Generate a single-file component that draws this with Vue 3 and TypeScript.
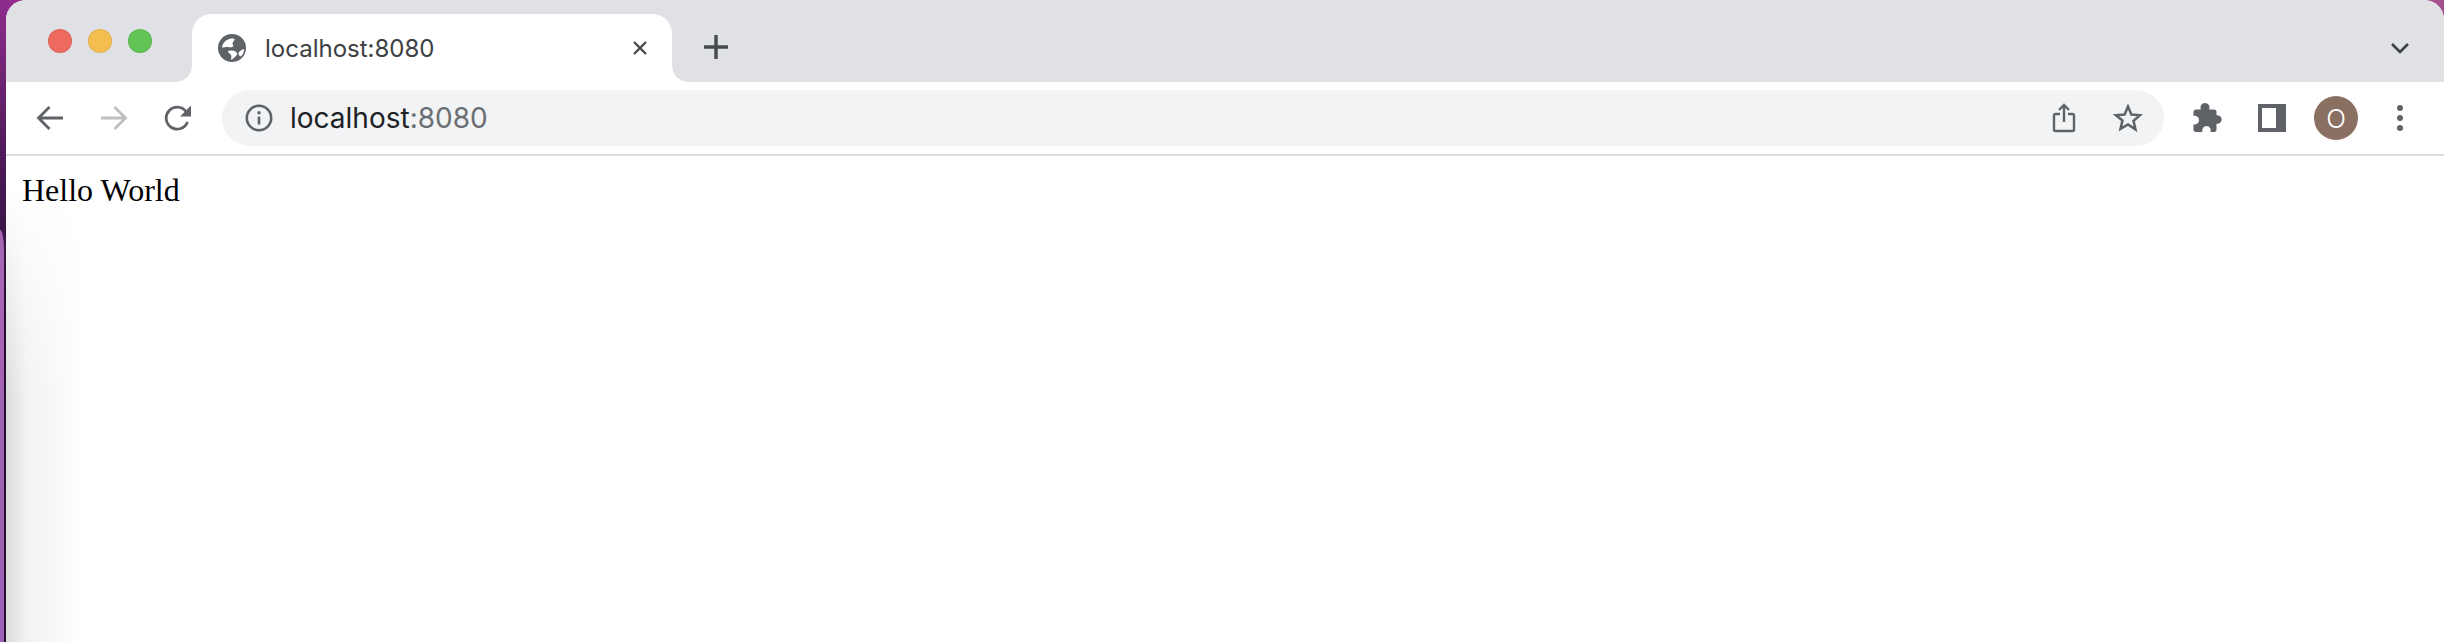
<script setup lang="ts">
const lights = ['#ee6a5f', '#f5bd4f', '#61c454'];
</script>

<template>
  <div class="page">
    <div class="desktop"></div>
    <div class="window">
      <div class="tabstrip">
        <div class="lights">
          <span v-for="c in lights" :key="c" class="light" :style="{ backgroundColor: c }"></span>
        </div>
        <div class="tab">
          <svg class="globe" width="28" height="28" viewBox="0 0 28 28">
            <circle cx="14" cy="14" r="14" fill="#5f6368" />
            <path d="M4 13.500C4.500 9 8 5.500 13 4.500c1.500 -.3 3 0 3.500 .5 .3 1.500 -1.500 2.500 -2 4 -.3 1.500 1.500 2 .5 3.500 -1.500 1.500 -3.500 .5 -5.500 .5 -2 0 -3.500 .5 -5.500 .5z" fill="#fff" />
            <path d="M10 17c2.500 -1 5.500 -.5 7.500 .5 2 1 2 3 .5 4.500 -1.500 1.500 -3 2.500 -4.500 4 -1 -1.500 .5 -3.500 -.5 -5 -.8 -1.500 -3 -2 -3 -4z" fill="#fff" />
            <path d="M20.500 19c1 -2 3.500 -3.500 5.500 -4 .3 2.500 -1 5.500 -3 7.500 -1.500 -.5 -3 -1.500 -2.500 -3.500z" fill="#fff" />
          </svg>
          <span class="tab-title">localhost:8080</span>
          <svg class="tab-close" width="16" height="16" viewBox="0 0 16 16">
            <path d="M2 2l12 12M14 2L2 14" stroke="#45484d" stroke-width="2.400" fill="none" />
          </svg>
        </div>
        <svg class="new-tab" width="24" height="24" viewBox="0 0 24 24">
          <path d="M12 1v22M1 12h22" stroke="#45484d" stroke-width="3.400" stroke-linecap="round" fill="none" />
        </svg>
        <svg class="tab-search" width="20" height="13" viewBox="0 0 20 13">
          <path d="M2 2l8 8 8-8" stroke="#3c4043" stroke-width="2.600" fill="none" />
        </svg>
      </div>

      <div class="toolbar">
        <button class="tool">
          <svg width="28" height="26" viewBox="0 0 28 26">
            <path d="M27 13H3M13.500 2 2.500 13l11 11" stroke="#5f6368" stroke-width="2.800" fill="none" />
          </svg>
        </button>
        <button class="tool">
          <svg width="28" height="26" viewBox="0 0 28 26">
            <path d="M1 13h24M14.500 2l11 11-11 11" stroke="#bdbfc2" stroke-width="2.800" fill="none" />
          </svg>
        </button>
        <button class="tool">
          <svg width="28" height="26" viewBox="0 0 28 26">
            <path d="M23.500 17a11 11 0 1 1-1.500-10.500" stroke="#5f6368" stroke-width="2.800" fill="none" />
            <path d="M27 0.500v11H16z" fill="#5f6368" />
          </svg>
        </button>

        <div class="omnibox">
          <svg class="info" width="28" height="28" viewBox="0 0 28 28">
            <circle cx="14" cy="14" r="12.200" stroke="#5f6368" stroke-width="2.600" fill="none" />
            <path d="M14 12.500v8" stroke="#5f6368" stroke-width="2.600" />
            <circle cx="14" cy="8.800" r="1.700" fill="#5f6368" />
          </svg>
          <span class="url">localhost<span class="url-port">:8080</span></span>
          <svg class="share" width="24" height="30" viewBox="0 0 24 30">
            <path d="M8 11H3.500Q2 11 2 12.500V26.500Q2 28 3.500 28h17q1.500 0 1.500-1.500V12.500Q22 11 20.500 11H16" stroke="#5f6368" stroke-width="2.400" fill="none" />
            <path d="M12 19V2.500M7 7l5-5 5 5" stroke="#5f6368" stroke-width="2.400" fill="none" />
          </svg>
          <svg class="star" width="30" height="30" viewBox="0 0 30 30">
            <path d="M15 3.500l3.400 8 8.600.7-6.500 5.700 2 8.500L15 21.400 7.500 25.900l2-8.500L3 12.200l8.600-.7z" stroke="#5f6368" stroke-width="2.500" stroke-linejoin="miter" fill="none" />
          </svg>
        </div>

        <button class="tool">
          <svg width="30" height="30" viewBox="0 0 30 30">
            <path d="M3 6.500H7.800A4.600 4.600 0 1 1 16.200 6.500H21Q23.500 6.500 23.500 9V12.300A4.300 4.300 0 1 1 23.500 20.700V26.500Q23.500 29 21 29H17.500A4.300 4.300 0 1 0 9.500 29H3Q.5 29 .5 26.500V21.200A4.300 4.300 0 1 0 .5 13V9Q.5 6.500 3 6.500z" fill="#5f6368" />
          </svg>
        </button>
        <button class="tool">
          <span class="side-panel"><span></span></span>
        </button>
        <button class="tool">
          <span class="avatar">O</span>
        </button>
        <button class="tool">
          <span class="dots"><i></i><i></i><i></i></span>
        </button>
      </div>

      <div class="content">
        <div class="shade"></div>
        <p class="hello">Hello World</p>
      </div>
    </div>
  </div>
</template>

<style>
html,
body {
  margin: 0;
  overflow: hidden;
}
</style>

<style scoped>
.page {
  display: flex;
  width: 2444px;
  height: 642px;
  background: linear-gradient(90deg, #8f2c8c 0 40px, #a5508f 40px);
  overflow: hidden;
}

.desktop {
  flex: 0 0 6px;
  background: linear-gradient(180deg, #8f2c8c, #4d1a58 160px, #3a1546 240px, #22102a 300px);
}

.desktop::after {
  content: '';
  display: block;
  width: 4px;
  height: 412px;
  margin-top: 230px;
  background: linear-gradient(180deg, #a865b4, #9c5fb6);
  border-radius: 0 4px 0 0 / 0 20px 0 0;
}

.window {
  flex: 1;
  display: flex;
  flex-direction: column;
  min-width: 0;
  background: #fff;
  border-radius: 20px 20px 0 0;
  overflow: hidden;
}

.tabstrip {
  flex: 0 0 82px;
  display: flex;
  background: #dfe1e5;
}

.lights {
  display: flex;
  gap: 16px;
  padding: 29px 0 0 42px;
}

.light {
  width: 24px;
  height: 24px;
  border-radius: 50%;
  box-shadow: inset 0 0 0 1px rgba(0, 0, 0, 0.07);
}

.tab {
  display: flex;
  align-items: center;
  position: relative;
  width: 480px;
  height: 68px;
  margin: 14px 0 0 40px;
  padding-left: 26px;
  box-sizing: border-box;
  background: #fff;
  border-radius: 20px 20px 0 0;
}

.tab::before,
.tab::after {
  content: '';
  position: absolute;
  bottom: 0;
  width: 16px;
  height: 16px;
}

.tab::before {
  left: -16px;
  background: radial-gradient(circle at 0 0, #dfe1e5 15.500px, #fff 16px);
}

.tab::after {
  right: -16px;
  background: radial-gradient(circle at 100% 0, #dfe1e5 15.500px, #fff 16px);
}

.globe {
  flex: none;
}

.tab-title {
  margin-left: 19px;
  font-family: Inter, sans-serif;
  font-size: 24px;
  color: #3c4043;
  white-space: nowrap;
}

.tab-close {
  flex: none;
  margin-left: auto;
  margin-right: 24px;
}

.new-tab {
  flex: none;
  margin: 35px 0 0 32px;
}

.tab-search {
  flex: none;
  margin: 42px 34px 0 auto;
}

.toolbar {
  flex: 0 0 72px;
  display: flex;
  align-items: center;
  padding: 0 12px;
  background: #fff;
}

.tool {
  flex: 0 0 64px;
  display: flex;
  align-items: center;
  justify-content: center;
  height: 56px;
  padding: 0;
  border: 0;
  background: none;
}

.omnibox {
  flex: 1;
  display: flex;
  align-items: center;
  height: 56px;
  margin: 0 12px 0 12px;
  padding: 0 21px 0 23px;
  box-sizing: border-box;
  background: #f1f3f4;
  border-radius: 28px;
}

.info {
  flex: none;
}

.url {
  margin-left: 17px;
  font-family: Inter, sans-serif;
  font-size: 28px;
  color: #202124;
  white-space: nowrap;
}

.url-port {
  color: #6b6e72;
}

.share {
  flex: none;
  margin-left: auto;
}

.star {
  flex: none;
  margin-left: 37px;
}

.side-panel {
  display: block;
  width: 28px;
  height: 28px;
  padding: 4px 10px 4px 4px;
  box-sizing: border-box;
  background: #5f6368;
}

.side-panel span {
  display: block;
  height: 100%;
  background: #fff;
}

.avatar {
  display: flex;
  align-items: center;
  justify-content: center;
  width: 44px;
  height: 44px;
  border-radius: 50%;
  background: #8a6f63;
  color: #fff;
  font-family: Inter, sans-serif;
  font-size: 26px;
  font-weight: 300;
}

.dots {
  display: flex;
  flex-direction: column;
  gap: 4px;
}

.dots i {
  display: block;
  width: 6px;
  height: 6px;
  border-radius: 50%;
  background: #5f6368;
}

.content {
  flex: 1;
  position: relative;
  border-top: 2px solid #dadce0;
}

.shade {
  position: absolute;
  inset: 0 auto 0 0;
  width: 80px;
  background: linear-gradient(90deg, #dcdcde, #f2f2f3 26%, #fff);
  -webkit-mask-image: linear-gradient(180deg, transparent 30px, #000 240px);
  mask-image: linear-gradient(180deg, transparent 30px, #000 240px);
}

.hello {
  position: relative;
  margin: 0;
  padding: 16px 0 0 16px;
  font-family: 'Liberation Serif', 'Times New Roman', serif;
  font-size: 32px;
  color: #000;
}
</style>
